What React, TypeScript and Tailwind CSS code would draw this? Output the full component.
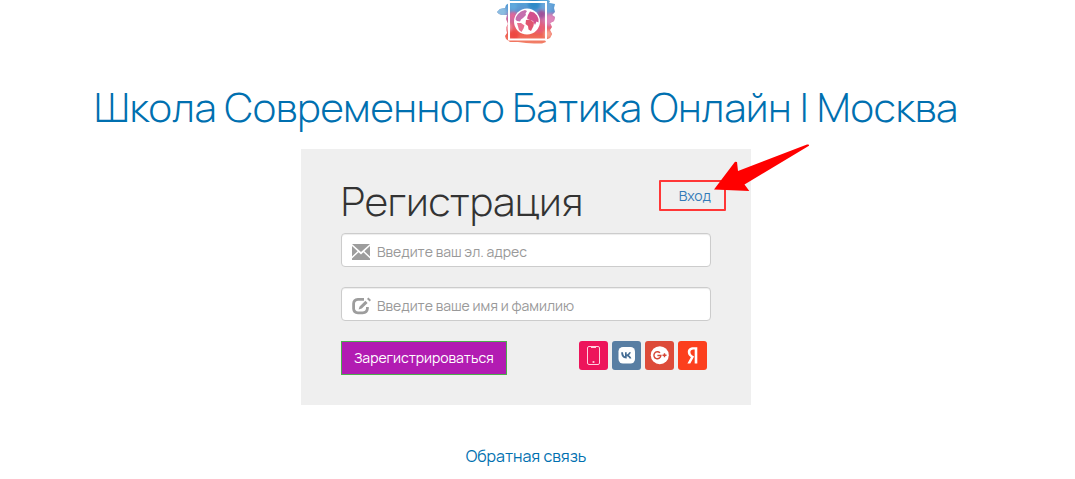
import { useId } from 'react';
import type { InputHTMLAttributes, ReactNode } from 'react';

function Logo() {
  return (
    <svg viewBox="0 0 60 46" className="h-[46px] w-[60px]" role="img" aria-label="Логотип школы">
      <defs>
        <linearGradient id="wash" x1="0" y1="0" x2="0" y2="1">
          <stop offset="0" stopColor="#4fa5da" />
          <stop offset="0.24" stopColor="#5f93cf" />
          <stop offset="0.38" stopColor="#c46ca8" />
          <stop offset="0.55" stopColor="#e2607f" />
          <stop offset="0.75" stopColor="#ee6253" />
          <stop offset="1" stopColor="#f38a6f" />
        </linearGradient>
        <filter id="soft" x="-20%" y="-20%" width="140%" height="140%">
          <feGaussianBlur stdDeviation="1.4" />
        </filter>
        <filter id="edge">
          <feGaussianBlur stdDeviation="0.5" />
        </filter>
        <clipPath id="blot">
          <path d="M14 0H52L54 1 53 3 59 4 58 8 59 12 56 15 59 17 58 21 54 23 56 27 54 30 56 34 54 38 49 40 50 42 46 43.5H38L30 43 22 42 14 42 10 39 9 36 11 33 10 28 12 24 10 19 11 15 6 15 3 14 1 12 4 9 9 8 10 5 13 3Z" />
        </clipPath>
      </defs>
      <g filter="url(#edge)">
        <g clipPath="url(#blot)">
          <path fill="url(#wash)" d="M0 0H60V46H0Z" />
          <g filter="url(#soft)">
            <circle cx="5" cy="12" r="6" fill="#8bbce0" />
            <circle cx="17" cy="6" r="4" fill="#5fa9dd" />
            <circle cx="38" cy="4" r="6" fill="#2f8ac8" />
            <circle cx="51" cy="7" r="6" fill="#6aa5da" />
            <circle cx="17" cy="16" r="4" fill="#e0659a" />
            <circle cx="46" cy="14" r="4" fill="#a0509a" />
            <circle cx="54" cy="20" r="6" fill="#dd86ba" />
            <circle cx="11" cy="27" r="4" fill="#f4a9b1" />
            <circle cx="43" cy="29" r="4" fill="#e85a78" />
            <circle cx="18" cy="35" r="5" fill="#ee4742" />
            <circle cx="52" cy="34" r="4" fill="#f7a491" />
          </g>
        </g>
      </g>
      <rect x="13" y="2" width="37" height="37.5" fill="none" stroke="#fff" strokeWidth="2" />
      <circle cx="31" cy="21.5" r="13" fill="#fff" />
      <path fill="#c56fae" d="M20 17L22 14 25 11.5 29 10 31 11 29.5 13.5 30 15 27 18 25 19.5 24 21.5 21 21 19.5 19.5Z" />
      <path fill="#e8718f" d="M21 23L25 23 28.5 25.5 27.5 28.5 25.5 32 23 30Z" />
      <path fill="#d3508d" d="M32 15L34 11.5 38 12.5 41 15.5 42.5 19 42.5 22.5 40.5 21.5 39 25 37 21 34 20 31 18.5Z" />
      <path fill="#e0556f" d="M30 20L34 19.5 38 22.5 37.5 26 35 31 32.5 29.5 32 26 29.5 24Z" />
    </svg>
  );
}

function MailIcon() {
  return (
    <svg viewBox="0 0 18 16" className="h-4 w-[18px] fill-[#9d9d9d]" aria-hidden="true">
      <path d="M0 0H18L9 8Z" />
      <path d="M0 2L5.6 7.2 0 12.5ZM18 2L12.4 7.2 18 12.5Z" />
      <path d="M0 16V14.6L6.6 8.2 9 10.6 11.4 8.2 18 14.6V16Z" />
    </svg>
  );
}

function EditIcon() {
  return (
    <svg viewBox="0 0 20 18" className="h-[18px] w-5" aria-hidden="true">
      <path d="M12 2.4H6Q1.6 2.8 1.6 6.8V11.6Q1.8 15.6 6 15.8H10.6Q15 15.6 15.4 11.6V10" fill="none" stroke="#9d9d9d" strokeWidth="2.8" />
      <path d="M6.6 12.4L7.6 9.4 13.4 3.8 15.6 6 9.8 11.4ZM15 2L16.4 .6 19 3 17.6 4.6Z" fill="#9d9d9d" />
    </svg>
  );
}

type FieldProps = InputHTMLAttributes<HTMLInputElement> & { label: string; icon: ReactNode };

function Field({ label, icon, ...rest }: FieldProps) {
  const id = useId();
  return (
    <div className="flex h-[34px] items-center rounded border border-[#ccc] bg-white pt-1 pl-[10px] shadow-[inset_0_1px_1px_rgba(0,0,0,0.075)]">
      <label htmlFor={id} aria-label={label} className="flex w-[25px] shrink-0 items-center">
        {icon}
      </label>
      <input
        id={id}
        aria-label={label}
        placeholder={label}
        className="h-7 min-w-0 flex-1 bg-transparent text-sm leading-7 font-normal text-[#555] outline-none placeholder:text-[#999]"
        {...rest}
      />
    </div>
  );
}

function SocialButtons() {
  const base = 'flex size-[29px] items-center justify-center rounded-[3px]';
  return (
    <div className="flex gap-1 pr-1">
      <button type="button" aria-label="Телефон" className={`${base} bg-[#ed145b]`}>
        <svg viewBox="0 0 29 29" className="size-full" fill="none" stroke="#ffd0df">
          <rect x="8.5" y="5.5" width="12" height="18" rx="1.5" strokeWidth="1" />
          <path d="M12 6.2H17" strokeWidth="1.6" />
          <path d="M13.6 21H15.4" strokeWidth="1.8" />
        </svg>
      </button>
      <button type="button" aria-label="ВКонтакте" className={`${base} bg-[#587ea3]`}>
        <svg viewBox="0 0 29 29" className="size-full">
          <rect x="6.5" y="6" width="16.5" height="16.5" rx="4.5" fill="#fff" />
          <path
            d="M9.2 11.2H11C11.1 13.6 12 14.9 13 15.3V11.2H14.7V13.5C15.8 13.3 16.7 12.4 17.1 11.2H18.9C18.5 12.6 17.6 13.7 16.8 14.3 17.8 14.8 18.9 15.8 19.4 17.4H17.5C17.1 16.3 16.1 15.4 14.7 15.2V17.4H14.3C11 17.4 9.3 15.2 9.2 11.2Z"
            fill="#456d94"
          />
        </svg>
      </button>
      <button type="button" aria-label="Google+" className={`${base} bg-[#dd4b39]`}>
        <svg viewBox="0 0 29 29" className="size-full">
          <circle cx="14.8" cy="14.2" r="9" fill="#fff" />
          <path d="M15 11.9A3.5 3.5 0 1 0 15.9 14.5H12.4M19.5 12.3V16.3M17.5 14.3H21.5" fill="none" stroke="#d64635" strokeWidth="1.4" />
        </svg>
      </button>
      <button type="button" aria-label="Яндекс" className={`${base} bg-[#fc3f1d]`}>
        <svg viewBox="0 0 29 29" className="size-full">
          <path
            d="M19.3 22.5H16.7V8.4H15.6C13.5 8.4 12.4 9.4 12.4 11C12.4 12.8 13.2 13.6 14.8 14.7L16.1 15.6 12.3 22.5H9.4L12.9 16.2C10.9 14.8 9.8 13.4 9.8 11.1C9.8 8.2 11.8 6.3 15.6 6.3H19.3Z"
            fill="#fff"
          />
        </svg>
      </button>
    </div>
  );
}

export default function App() {
  return (
    <div className="flex flex-col items-center pr-[23px] font-['Manrope','Inter',sans-serif]">
      <Logo />
      <h1 className="mt-9 text-center text-[40px] leading-[50px] font-light text-[#0070b0]">
        <a href="#home">Школа Современного Батика Онлайн | Москва</a>
      </h1>
      <main className="relative mt-[17px] w-full max-w-[450px] bg-[#efefef] px-10 pt-[27px] pb-[30px]">
        <form onSubmit={(e) => e.preventDefault()}>
          <div className="flex items-start justify-between">
            <h2 className="text-[40px] leading-[50px] font-light text-[#333]">Регистрация</h2>
            <a href="#login" className="pt-2 text-sm leading-6 font-normal text-[#337ab7]">
              Вход
            </a>
          </div>
          <div className="mt-[7px] flex flex-col gap-5">
            <Field label="Введите ваш эл. адрес" icon={<MailIcon />} type="email" name="email" />
            <Field label="Введите ваше имя и фамилию" icon={<EditIcon />} type="text" name="name" />
            <div className="flex items-start justify-between">
              <button type="submit" className="h-[34px] border border-[#4cae4c] bg-[#b21cb2] px-3 text-sm text-white">
                Зарегистрироваться
              </button>
              <SocialButtons />
            </div>
          </div>
        </form>
        <div className="pointer-events-none absolute top-[31px] right-[25px] h-[31px] w-[67px] rounded-[1px] border-2 border-[#ff3636]" />
        <svg viewBox="0 0 96 48" className="pointer-events-none absolute top-[-6px] right-[-58px] h-12 w-24" aria-hidden="true">
          <path d="M1 46.5L22 18.8 24 19 25 28 94 1.5Q96.5 1 96 2.7L31.5 41.5 36.3 48Z" fill="#f00" />
        </svg>
      </main>
      <a href="#feedback" className="mt-[39px] text-base leading-6 text-[#0070b0]">
        Обратная связь
      </a>
    </div>
  );
}
